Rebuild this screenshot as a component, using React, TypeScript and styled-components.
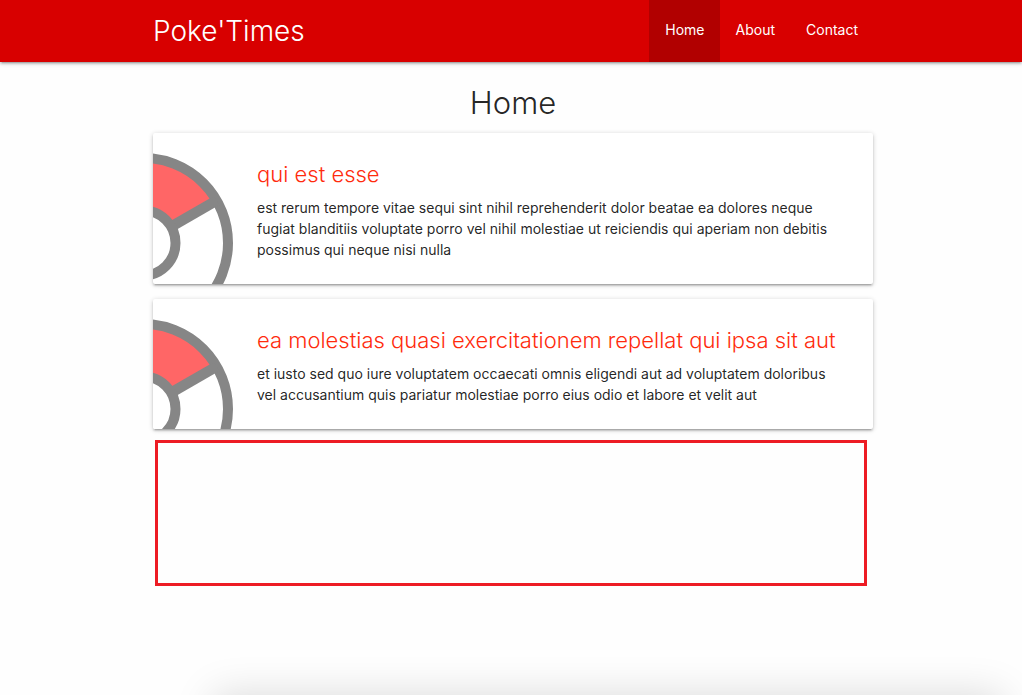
import React from 'react';
import styled, { createGlobalStyle } from 'styled-components';

const GlobalStyle = createGlobalStyle`
  *, *::before, *::after { box-sizing: border-box; }
  body {
    margin: 0;
    background: #fefefe;
    color: rgba(0, 0, 0, 0.87);
    font-family: Inter, "Liberation Sans", sans-serif;
    font-size: 14px;
    line-height: 21px;
  }
`;

const Page = styled.div`
  display: flex;
  flex-direction: column;
  min-height: 100vh;
`;

const NavBar = styled.nav`
  padding-left: 4px;
  background: #d80000;
  box-shadow: 0 2px 2px 0 rgba(0, 0, 0, 0.14), 0 3px 1px -2px rgba(0, 0, 0, 0.12),
    0 1px 5px 0 rgba(0, 0, 0, 0.2);
`;

const Container = styled.div`
  width: 90%;
  max-width: 720px;
  margin: 0 auto;
`;

const NavRow = styled(Container)`
  display: flex;
  justify-content: space-between;
  height: 62px;
`;

const Brand = styled.a`
  color: #fff;
  font-size: 28px;
  font-weight: 300;
  line-height: 62px;
  text-decoration: none;
`;

const NavList = styled.ul`
  display: flex;
  margin: 0;
  padding: 0;
  list-style: none;
`;

const NavLink = styled.a<{ $active?: boolean }>`
  display: block;
  padding: 0 15px 0 16px;
  background: ${({ $active }) => ($active ? '#b10000' : 'transparent')};
  color: #fff;
  font-size: 14px;
  line-height: 60px;
  height: 62px;
  text-decoration: none;
`;

const Main = styled.main`
  padding-left: 4px;
`;

const Heading = styled.h1`
  margin: 0;
  padding: 21px 0 10px;
  font-size: 31px;
  font-weight: 300;
  line-height: 40px;
  text-align: center;
`;

const Posts = styled.div`
  display: grid;
  gap: 15px;
`;

const Card = styled.article`
  position: relative;
  overflow: hidden;
  padding: 24px 0 24px 104px;
  border-radius: 2px;
  background: #fff;
  box-shadow: 0 2px 2px 0 rgba(0, 0, 0, 0.14), 0 3px 1px -2px rgba(0, 0, 0, 0.12),
    0 1px 5px 0 rgba(0, 0, 0, 0.2);
`;

const BallArt = styled.svg`
  position: absolute;
  top: 0;
  left: 0;
`;

const CardTitle = styled.h2`
  margin: 0;
  padding: 0 24px 6px 0;
  font-size: 22px;
  font-weight: 300;
  line-height: 34px;
`;

const TitleLink = styled.a`
  color: #ff2b0d;
  text-decoration: none;
`;

const CardText = styled.p`
  margin: 0;
  padding-right: 34px;
`;

const Outline = styled.div`
  height: 146px;
  margin: 11px 6px 0 2px;
  border: 3px solid #ed1c24;
`;

const Shade = styled.div`
  height: 70px;
  margin-top: auto;
  overflow: hidden;
`;

const ShadeCaster = styled.div`
  height: 100px;
  margin: 70px 20px 0 214px;
  box-shadow: 0 0 40px rgba(0, 0, 0, 0.15);
`;

const Pokeball = () => (
  <BallArt width="90" height="220" viewBox="0 0 90 220" aria-hidden="true">
    <path d="M-10 110 L61 69 A82 82 0 0 0 -10 28 Z" fill="#ff6666" />
    <circle cx="-10" cy="110" r="85" fill="none" stroke="#868686" strokeWidth="10" />
    <path d="M-10 110 L63.6 67.5" stroke="#868686" strokeWidth="10.6" />
    <circle cx="-10" cy="110" r="32.5" fill="#fff" stroke="#868686" strokeWidth="10" />
  </BallArt>
);

const posts = [
  {
    title: 'qui est esse',
    body: 'est rerum tempore vitae sequi sint nihil reprehenderit dolor beatae ea dolores neque fugiat blanditiis voluptate porro vel nihil molestiae ut reiciendis qui aperiam non debitis possimus qui neque nisi nulla',
  },
  {
    title: 'ea molestias quasi exercitationem repellat qui ipsa sit aut',
    body: 'et iusto sed quo iure voluptatem occaecati omnis eligendi aut ad voluptatem doloribus vel accusantium quis pariatur molestiae porro eius odio et labore et velit aut',
  },
];

const links = ['Home', 'About', 'Contact'];

export default function App() {
  return (
    <Page>
      <GlobalStyle />
      <NavBar>
        <NavRow>
          <Brand href="#">Poke'Times</Brand>
          <NavList>
            {links.map((name) => (
              <li key={name}>
                <NavLink href={`#${name.toLowerCase()}`} $active={name === 'Home'}>
                  {name}
                </NavLink>
              </li>
            ))}
          </NavList>
        </NavRow>
      </NavBar>
      <Main>
        <Container>
          <Heading>Home</Heading>
          <Posts>
            {posts.map(({ title, body }) => (
              <Card key={title}>
                <Pokeball />
                <CardTitle>
                  <TitleLink href="#post">{title}</TitleLink>
                </CardTitle>
                <CardText>{body}</CardText>
              </Card>
            ))}
          </Posts>
          <Outline />
        </Container>
      </Main>
      <Shade aria-hidden="true">
        <ShadeCaster />
      </Shade>
    </Page>
  );
}
